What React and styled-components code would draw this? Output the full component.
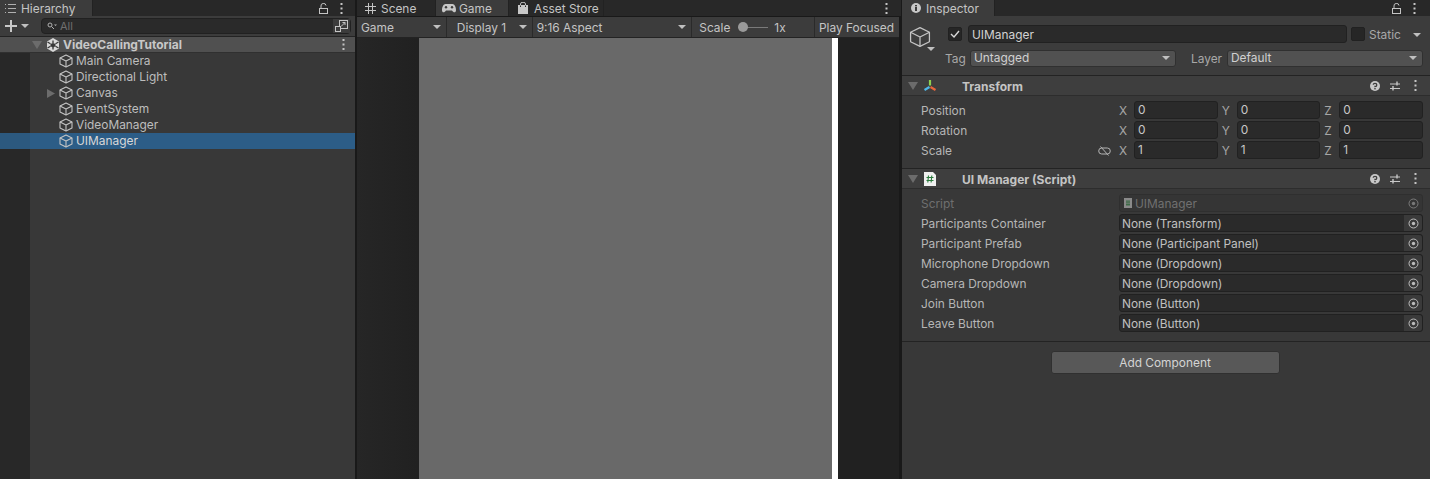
import React from 'react'
import styled, { createGlobalStyle } from 'styled-components'

const Global = createGlobalStyle`
  html, body { margin: 0; padding: 0; background: #1a1a1a; overflow: hidden; }
  * { box-sizing: border-box; }
`

const Page = styled.div`
  width: 1430px;
  height: 479px;
  display: grid;
  grid-template-columns: 355px 545px 528px;
  column-gap: 1px;
  font-family: Inter, "Liberation Sans", sans-serif;
  font-size: 11.9px;
  color: #c4c4c4;
  background: #191919;
  overflow: hidden;
`
const Panel = styled.div`
  display: flex;
  flex-direction: column;
  min-width: 0;
  height: 479px;
  margin-left: ${p => p.$ml || 0}px;
`
const TabStrip = styled.div`
  height: 16px;
  flex: none;
  display: flex;
  align-items: stretch;
  background: #282828;
`
const Tab = styled.div`
  width: ${p => p.$w}px;
  display: flex;
  align-items: center;
  gap: ${p => p.$gap || 5}px;
  padding-left: ${p => p.$pl || 5}px;
  background: ${p => (p.$active ? '#3c3c3c' : '#282828')};
  border-right: 1px solid #222;
  white-space: nowrap;
`
const TabTools = styled.div`
  margin-left: auto;
  display: flex;
  align-items: center;
  gap: 12px;
  padding-right: ${p => p.$pr || 12}px;
`
const HierarchyBar = styled.div`
  height: 21px;
  flex: none;
  display: flex;
  align-items: center;
  background: #3c3c3c;
  border-bottom: 1px solid #232323;
  padding: 0 4px 0 5px;
`
const Search = styled.div`
  margin-left: 12px;
  flex: 1;
  height: 16px;
  display: flex;
  align-items: center;
  background: #2a2a2a;
  border: 1px solid #212121;
  border-radius: 4px;
  color: #6f6f6f;
  font-size: 11px;
  padding-left: 5px;
  gap: 3px;
`
const SearchEnd = styled.div`
  margin-left: auto;
  width: 17px;
  height: 14px;
  display: flex;
  align-items: center;
  justify-content: center;
  background: #3c3c3c;
`
const Tree = styled.div`
  flex: 1;
  display: grid;
  grid-template-columns: 30px 1fr;
  background: #383838;
`
const Gutter = styled.div`
  background: #282828;
  padding-top: 96px;
`
const GutterSelected = styled.div`
  height: 16px;
  background: #2c5d87;
  opacity: 0.92;
`
const TreeList = styled.div`
  display: flex;
  flex-direction: column;
`
const SceneRow = styled.div`
  height: 16px;
  margin-left: -30px;
  padding-left: 32px;
  display: flex;
  align-items: center;
  background: #505050;
  border-bottom: 1px solid #303030;
  color: #c8c8c8;
  font-weight: 700;
  font-size: 12px;
`
const SceneName = styled.span`
  margin-left: 3px;
`
const TreeRow = styled.div`
  height: 16px;
  display: flex;
  align-items: center;
  padding-left: ${p => (p.$nested ? 17 : 29)}px;
  gap: 3px;
  background: ${p => (p.$selected ? '#2c5d87' : 'transparent')};
  color: ${p => (p.$selected ? '#d8d8d8' : '#bdbdbd')};
`
const TreeLabel = styled.span`
  padding-bottom: 2px;
`
const GameToolbar = styled.div`
  height: 21px;
  flex: none;
  margin-top: 1px;
  display: flex;
  background: #3c3c3c;
  margin-right: 2px;
  border-bottom: 1px solid #232323;
`
const ToolItem = styled.div`
  width: ${p => p.$w}px;
  display: flex;
  align-items: center;
  justify-content: ${p => (p.$start ? 'flex-start' : 'space-between')};
  padding: 0 5px 0 ${p => p.$pl || 5}px;
  border-right: ${p => (p.$last ? 0 : '1px solid #2a2a2a')};
  white-space: nowrap;
`
const Arrow = styled.span`
  width: 0;
  height: 0;
  flex: none;
  margin-left: ${p => p.$ml || 0}px;
  border-left: 4px solid transparent;
  border-right: 4px solid transparent;
  border-top: 4px solid #c0c0c0;
`
const Slider = styled.span`
  position: relative;
  display: inline-block;
  width: 30px;
  height: 1px;
  background: #7a7a7a;
  margin: 0 6px 0 8px;
  &::before {
    content: '';
    position: absolute;
    left: 0;
    top: -5px;
    width: 10px;
    height: 10px;
    border-radius: 50%;
    background: #9a9a9a;
  }
`
const GameView = styled.div`
  flex: 1;
  display: flex;
  background: #252525;
  background-image: linear-gradient(90deg, #262626 0, #212121 60px);
  padding-left: 62px;
  margin-right: 2px;
`
const Portrait = styled.div`
  width: 413px;
  background: #696969;
`
const WhiteBar = styled.div`
  width: 6px;
  background: #fff;
`
const InspectorBody = styled.div`
  flex: 1;
  display: flex;
  flex-direction: column;
  background: #383838;
`
const ObjectHead = styled.div`
  height: 60px;
  flex: none;
  display: flex;
  background: #3c3c3c;
  border-bottom: 1px solid #232323;
`
const ObjectIcon = styled.div`
  width: 44px;
  padding: 10px 0 0 7px;
  position: relative;
`
const IconArrow = styled(Arrow)`
  position: absolute;
  left: 25px;
  top: 31px;
`
const ObjectMain = styled.div`
  flex: 1;
  display: flex;
  flex-direction: column;
  padding-top: 9px;
`
const NameRow = styled.div`
  height: 18px;
  display: flex;
  align-items: center;
  gap: 5px;
  padding-left: 2px;
`
const Check = styled.div`
  width: 14px;
  height: 14px;
  flex: none;
  display: flex;
  align-items: center;
  justify-content: center;
  background: #262626;
  border: 1px solid #212121;
  border-radius: 2px;
`
const NameField = styled.div`
  width: 379px;
  height: 18px;
  margin: 0 -1px 0 1px;
  line-height: 17px;
  padding-left: 3px;
  background: #2a2a2a;
  border: 1px solid #212121;
  border-radius: 3px;
  color: #d2d2d2;
`
const StaticLabel = styled.div`
  margin-left: -1px;
  padding-top: 1px;
  display: flex;
  align-items: center;
  gap: 12px;
  color: #a8a8a8;
`
const TagRow = styled.div`
  height: 18px;
  margin-top: 6px;
  display: flex;
  align-items: center;
  margin-left: -1px;
`
const SmallLabel = styled.span`
  color: #a8a8a8;
  width: ${p => p.$w}px;
  flex: none;
  padding-top: 1px;
  margin-left: ${p => p.$ml || 0}px;
`
const Select = styled.div`
  width: ${p => p.$w}px;
  height: 17px;
  display: flex;
  align-items: center;
  justify-content: space-between;
  padding: 0 5px 1px 3px;
  background: #515151;
  border: 1px solid #303030;
  border-radius: 3px;
  color: #d0d0d0;
`
const ComponentHead = styled.div`
  height: 20px;
  flex: none;
  display: flex;
  align-items: center;
  background: #3e3e3e;
  border-bottom: 1px solid #2d2d2d;
  padding: 0 13px 0 6px;
  gap: 5px;
`
const Fold = styled.span`
  width: 0;
  height: 0;
  flex: none;
  border-left: 5px solid transparent;
  border-right: 5px solid transparent;
  border-top: 8px solid #6c6c6c;
  margin-top: 1px;
  margin-right: ${p => p.$mr || 0}px;
`
const IconSlot = styled.div`
  width: 14px;
  flex: none;
  display: flex;
  justify-content: center;
`
const ComponentTitle = styled.div`
  font-weight: 700;
  font-size: 12px;
  color: #c4c4c4;
  margin-left: 20px;
  padding-top: 2px;
`
const HeadTools = styled.div`
  margin-left: auto;
  display: flex;
  align-items: center;
  gap: 10px;
`
const KebabSlot = styled.div`
  display: flex;
  margin-left: 4px;
`
const PropList = styled.div`
  padding: 5px 7px 9px 19px;
  display: flex;
  flex-direction: column;
  gap: 2px;
  border-bottom: 1px solid #232323;
`
const PropRow = styled.div`
  height: 18px;
  display: flex;
  align-items: center;
  color: ${p => (p.$dim ? '#6f6f6f' : '#b6b6b6')};
`
const PropLabel = styled.div`
  width: 198px;
  flex: none;
  position: relative;
`
const LinkIcon = styled.span`
  position: absolute;
  right: 8px;
  top: 3px;
  display: flex;
`
const Vector = styled.div`
  flex: 1;
  display: grid;
  grid-template-columns: repeat(3, 1fr);
  column-gap: 4px;
`
const Axis = styled.div`
  display: flex;
  align-items: center;
`
const AxisName = styled.span`
  width: 15px;
  flex: none;
  color: #a6a6a6;
`
const NumField = styled.div`
  flex: 1;
  height: 18px;
  line-height: 16px;
  padding-left: 3px;
  background: #2a2a2a;
  border: 1px solid #212121;
  border-radius: 3px;
  color: #c8c8c8;
`
const ObjField = styled.div`
  flex: 1;
  height: 18px;
  display: flex;
  align-items: center;
  padding-left: ${p => (p.$dim ? 4 : 2)}px;
  gap: 3px;
  background: ${p => (p.$dim ? '#353535' : '#2a2a2a')};
  border: 1px solid ${p => (p.$dim ? '#2f2f2f' : '#212121')};
  border-radius: 3px;
  color: ${p => (p.$dim ? '#707070' : '#c0c0c0')};
`
const Picker = styled.div`
  margin-left: auto;
  width: 18px;
  height: 16px;
  display: flex;
  align-items: center;
  justify-content: center;
  background: ${p => (p.$dim ? '#353535' : '#3a3a3a')};
  border-radius: 0 3px 3px 0;
  opacity: ${p => (p.$dim ? 0.5 : 1)};
`
const Footer = styled.div`
  display: flex;
  justify-content: center;
  padding: 9px 2px 0 0;
`
const AddButton = styled.div`
  width: 229px;
  height: 23px;
  display: flex;
  align-items: center;
  justify-content: center;
  background: #585858;
  border: 1px solid #303030;
  border-radius: 3px;
  color: #d4d4d4;
`

const Cube = ({ size = 14, stroke = '#c4c4c4', width = 1.1 }) => (
  <svg width={size} height={size} viewBox="0 0 14 14" fill="none" stroke={stroke} strokeWidth={width} strokeLinejoin="round" style={{ flex: 'none' }}>
    <path d="M7 1 L13 4 V10 L7 13 L1 10 V4 Z" />
    <path d="M1 4 L7 7 L13 4 M7 7 V13" />
  </svg>
)

const Kebab = () => (
  <svg width="3" height="11" viewBox="0 0 3 11" fill="#c4c4c4" style={{ flex: 'none' }}>
    <rect x="0.5" y="0" width="2" height="2" />
    <rect x="0.5" y="4.5" width="2" height="2" />
    <rect x="0.5" y="9" width="2" height="2" />
  </svg>
)

const Lock = () => (
  <svg width="9" height="11" viewBox="0 0 9 11" fill="none" stroke="#c4c4c4" style={{ flex: 'none' }}>
    <rect x="0.5" y="5.5" width="8" height="5" />
    <path d="M2 5 V3 A2.5 2.3 0 0 1 7 2.5" />
  </svg>
)

const ListIcon = () => (
  <svg width="11" height="9" viewBox="0 0 11 9" fill="#b0b0b0" style={{ flex: 'none' }}>
    <rect x="0" y="0" width="1" height="1" /><rect x="3" y="0" width="8" height="1" />
    <rect x="0" y="4" width="1" height="1" /><rect x="3" y="4" width="8" height="1" />
    <rect x="0" y="8" width="1" height="1" /><rect x="3" y="8" width="8" height="1" />
  </svg>
)

const Plus = () => (
  <svg width="12" height="12" viewBox="0 0 12 12" fill="#c8c8c8" style={{ flex: 'none' }}>
    <rect x="5" y="0" width="2" height="12" />
    <rect x="0" y="5" width="12" height="2" />
  </svg>
)

const SearchIcon = () => (
  <svg width="10" height="8" viewBox="0 0 10 8" fill="none" stroke="#b0b0b0" style={{ flex: 'none' }}>
    <circle cx="3" cy="3" r="2" />
    <path d="M4.5 4.5 L7 7" />
    <path d="M7 2.5 H10 L8.5 4 Z" fill="#b0b0b0" stroke="none" />
  </svg>
)

const SceneSearch = () => (
  <svg width="13" height="12" viewBox="0 0 13 12" fill="none" stroke="#c4c4c4">
    <rect x="4.5" y="0.5" width="8" height="8" />
    <rect x="0.5" y="6.5" width="5" height="5" fill="#3c3c3c" />
    <path d="M6 6.5 L10 2.5 M7.5 2.5 H10 V5" />
  </svg>
)

const UnityLogo = () => (
  <svg width="14" height="14" viewBox="0 0 14 14" style={{ flex: 'none' }}>
    <path d="M7 0 L13 3.5 V10.5 L7 14 L1 10.5 V3.5 Z" fill="#d8d8d8" />
    <path d="M7 2.5 V5 M1.5 4 L4.5 5.8 M12.5 4 L9.5 5.8 M1.5 10 L4.5 8.3 M12.5 10 L9.5 8.3 M7 11.5 V9" stroke="#383838" strokeWidth="1.3" fill="none" />
    <path d="M7 5 L9.5 6 V8.3 L7 9.5 L4.5 8.3 V6 Z" fill="#383838" />
  </svg>
)

const HashIcon = () => (
  <svg width="11" height="11" viewBox="0 0 11 11" stroke="#c4c4c4" style={{ flex: 'none' }}>
    <path d="M3.5 0 V11 M7.5 0 V11 M0 3.5 H11 M0 7.5 H11" />
  </svg>
)

const Gamepad = () => (
  <svg width="14" height="9" viewBox="0 0 14 9" style={{ flex: 'none' }}>
    <path d="M3.5 0 H10.5 C12.5 0 14 3 14 6 C14 9 11.5 9 10 6.5 H4 C2.5 9 0 9 0 6 C0 3 1.5 0 3.5 0 Z" fill="#c8c8c8" />
    <circle cx="4" cy="3.2" r="1.2" fill="#3c3c3c" />
    <circle cx="10" cy="3.2" r="1.2" fill="#3c3c3c" />
  </svg>
)

const Bag = () => (
  <svg width="10" height="12" viewBox="0 0 10 12" style={{ flex: 'none' }}>
    <path d="M0 3 H10 V12 H0 Z" fill="#c8c8c8" />
    <path d="M2.5 5 V2 A2.5 1.8 0 0 1 7.5 2 V5" fill="none" stroke="#c8c8c8" />
    <path d="M2.5 3.5 V5 M7.5 3.5 V5" stroke="#282828" />
  </svg>
)

const InfoIcon = () => (
  <svg width="10" height="10" viewBox="0 0 10 10" style={{ flex: 'none' }}>
    <circle cx="5" cy="5" r="5" fill="#c8c8c8" />
    <rect x="4" y="4" width="2" height="4" fill="#3c3c3c" />
    <rect x="4" y="2" width="2" height="1.4" fill="#3c3c3c" />
  </svg>
)

const TickIcon = () => (
  <svg width="10" height="8" viewBox="0 0 10 8" fill="none" stroke="#d8d8d8" strokeWidth="1.4">
    <path d="M1 4 L4 7 L9 1" />
  </svg>
)

const Gizmo = () => (
  <svg width="14" height="14" viewBox="0 0 14 14" style={{ flex: 'none' }} fill="none" strokeWidth="2.2">
    <path d="M7 1 V6.5" stroke="#8fd14f" />
    <path d="M6.5 8 L1.5 11" stroke="#4fb8e8" />
    <path d="M7.5 8 L12.5 11" stroke="#e8663c" />
  </svg>
)

const HelpIcon = () => (
  <svg width="10" height="10" viewBox="0 0 10 10" style={{ flex: 'none' }}>
    <circle cx="5" cy="5" r="5" fill="#c8c8c8" />
    <path d="M3.2 3.8 A1.8 1.6 0 1 1 5 5.5 V6.3" fill="none" stroke="#3e3e3e" strokeWidth="1.3" />
    <rect x="4.3" y="7" width="1.4" height="1.4" fill="#3e3e3e" />
  </svg>
)

const Sliders = () => (
  <svg width="10" height="10" viewBox="0 0 10 10" stroke="#c8c8c8" style={{ flex: 'none' }}>
    <path d="M0 3 H10 M0 7.5 H10" />
    <path d="M7 0.5 V4.5 M3 5 V9.5" strokeWidth="1.4" />
  </svg>
)

const ScriptIcon = () => (
  <svg width="12" height="14" viewBox="0 0 12 14" style={{ flex: 'none' }}>
    <path d="M0 0 H9 L12 3 V14 H0 Z" fill="#f0f0f0" />
    <path d="M4.5 3.5 L3.8 10.5 M7.8 3.5 L7.1 10.5 M2.5 5.5 H9.5 M2.5 8.5 H9.5" stroke="#2a7a3c" strokeWidth="1.1" />
  </svg>
)

const MiniScript = () => (
  <svg width="8" height="10" viewBox="0 0 8 10" style={{ flex: 'none' }}>
    <path d="M0 0 H8 V10 H0 Z" fill="#8a8a8a" />
    <path d="M3 2 V8 M5 2 V8 M2 4 H6 M2 6.5 H6" stroke="#3f6a48" />
  </svg>
)

const Target = () => (
  <svg width="11" height="11" viewBox="0 0 11 11" style={{ flex: 'none' }}>
    <circle cx="5.5" cy="5.5" r="4.5" fill="none" stroke="#bdbdbd" />
    <circle cx="5.5" cy="5.5" r="1.7" fill="#bdbdbd" />
  </svg>
)

const LinkOff = () => (
  <svg width="13" height="10" viewBox="0 0 13 10" fill="none" stroke="#b4b4b4">
    <rect x="0.7" y="2" width="11.6" height="6" rx="3" />
    <path d="M2.5 0.5 L10.5 9.5" />
  </svg>
)

const SideArrow = () => (
  <svg width="8" height="9" viewBox="0 0 8 9" fill="#6c6c6c" style={{ flex: 'none', marginRight: 1 }}>
    <path d="M0 0 L8 4.5 L0 9 Z" />
  </svg>
)

const VectorRow = ({ label, value, link }) => (
  <PropRow>
    <PropLabel>
      {label}
      {link && <LinkIcon><LinkOff /></LinkIcon>}
    </PropLabel>
    <Vector>
      {['X', 'Y', 'Z'].map(a => (
        <Axis key={a}>
          <AxisName>{a}</AxisName>
          <NumField>{value}</NumField>
        </Axis>
      ))}
    </Vector>
  </PropRow>
)

const ComponentHeader = ({ icon, title }) => (
  <ComponentHead>
    <Fold />
    <IconSlot>{icon}</IconSlot>
    <ComponentTitle>{title}</ComponentTitle>
    <HeadTools>
      <HelpIcon />
      <Sliders />
      <KebabSlot><Kebab /></KebabSlot>
    </HeadTools>
  </ComponentHead>
)

const refs = [
  ['Participants Container', 'None (Transform)'],
  ['Participant Prefab', 'None (Participant Panel)'],
  ['Microphone Dropdown', 'None (Dropdown)'],
  ['Camera Dropdown', 'None (Dropdown)'],
  ['Join Button', 'None (Button)'],
  ['Leave Button', 'None (Button)'],
]

const App = () => {
  return (
    <Page>
      <Global />
      <Panel>
        <TabStrip>
          <Tab $w={93} $active>
            <ListIcon />
            Hierarchy
          </Tab>
          <TabTools><Lock /><Kebab /></TabTools>
        </TabStrip>
        <HierarchyBar>
          <Plus />
          <Arrow $ml={4} />
          <Search>
            <SearchIcon />
            All
            <SearchEnd><SceneSearch /></SearchEnd>
          </Search>
        </HierarchyBar>
        <Tree>
          <Gutter><GutterSelected /></Gutter>
          <TreeList>
            <SceneRow>
              <Fold $mr={4} />
              <UnityLogo />
              <SceneName>VideoCallingTutorial</SceneName>
              <TabTools $pr={10}><Kebab /></TabTools>
            </SceneRow>
            <TreeRow><Cube /><TreeLabel>Main Camera</TreeLabel></TreeRow>
            <TreeRow><Cube /><TreeLabel>Directional Light</TreeLabel></TreeRow>
            <TreeRow $nested><SideArrow /><Cube /><TreeLabel>Canvas</TreeLabel></TreeRow>
            <TreeRow><Cube /><TreeLabel>EventSystem</TreeLabel></TreeRow>
            <TreeRow><Cube /><TreeLabel>VideoManager</TreeLabel></TreeRow>
            <TreeRow $selected><Cube /><TreeLabel>UIManager</TreeLabel></TreeRow>
          </TreeList>
        </Tree>
      </Panel>

      <Panel $ml={1}>
        <TabStrip>
          <Tab $w={79} $pl={8}><HashIcon />Scene</Tab>
          <Tab $w={73} $active $pl={6} $gap={3}><Gamepad />Game</Tab>
          <Tab $w={95} $pl={9} $gap={6}><Bag />Asset Store</Tab>
          <TabTools $pr={13}><Kebab /></TabTools>
        </TabStrip>
        <GameToolbar>
          <ToolItem $w={90} $pl={4}>Game<Arrow /></ToolItem>
          <ToolItem $w={86} $pl={10}>Display 1<Arrow /></ToolItem>
          <ToolItem $w={160} $pl={4}>9:16 Aspect<Arrow /></ToolItem>
          <ToolItem $w={123} $pl={7} $start>Scale<Slider />1x</ToolItem>
          <ToolItem $w={84} $pl={4} $last>Play Focused</ToolItem>
        </GameToolbar>
        <GameView>
          <Portrait />
          <WhiteBar />
        </GameView>
      </Panel>

      <Panel>
        <TabStrip>
          <Tab $w={93} $active $pl={9} $gap={5}><InfoIcon />Inspector</Tab>
          <TabTools $pr={14}><Lock /><Kebab /></TabTools>
        </TabStrip>
        <InspectorBody>
          <ObjectHead>
            <ObjectIcon>
              <Cube size={22} width={0.8} />
              <IconArrow />
            </ObjectIcon>
            <ObjectMain>
              <NameRow>
                <Check><TickIcon /></Check>
                <NameField>UIManager</NameField>
                <Check />
                <StaticLabel>Static<Arrow /></StaticLabel>
              </NameRow>
              <TagRow>
                <SmallLabel $w={25}>Tag</SmallLabel>
                <Select $w={206}>Untagged<Arrow /></Select>
                <SmallLabel $ml={15} $w={36}>Layer</SmallLabel>
                <Select $w={196}>Default<Arrow /></Select>
              </TagRow>
            </ObjectMain>
          </ObjectHead>

          <ComponentHeader icon={<Gizmo />} title="Transform" />
          <PropList>
            <VectorRow label="Position" value="0" />
            <VectorRow label="Rotation" value="0" />
            <VectorRow label="Scale" value="1" link />
          </PropList>

          <ComponentHeader icon={<ScriptIcon />} title="UI Manager (Script)" />
          <PropList>
            <PropRow $dim>
              <PropLabel>Script</PropLabel>
              <ObjField $dim>
                <MiniScript />UIManager
                <Picker $dim><Target /></Picker>
              </ObjField>
            </PropRow>
            {refs.map(([label, value]) => (
              <PropRow key={label}>
                <PropLabel>{label}</PropLabel>
                <ObjField>
                  {value}
                  <Picker><Target /></Picker>
                </ObjField>
              </PropRow>
            ))}
          </PropList>
          <Footer><AddButton>Add Component</AddButton></Footer>
        </InspectorBody>
      </Panel>
    </Page>
  )
}

export default App
